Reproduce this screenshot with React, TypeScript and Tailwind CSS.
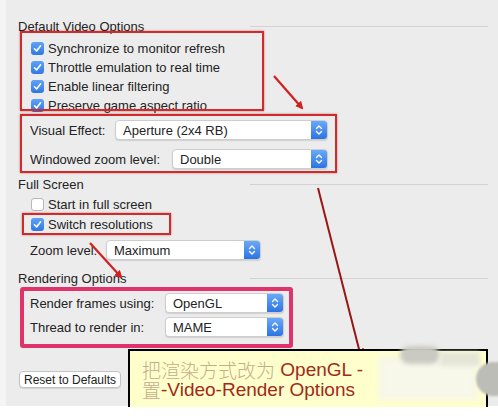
import React from "react";

const font = { fontFamily: '"Liberation Sans", Arial, sans-serif' };

function Check({ checked }: { checked: boolean }) {
  return checked ? (
    <div className="w-[13px] h-[13px] rounded-[3px] bg-linear-to-b from-[#5ea3f6] to-[#2f78e4] flex items-center justify-center shrink-0">
      <svg width="9" height="9" viewBox="0 0 9 9">
        <path d="M1.5 4.8 L3.6 6.9 L7.6 1.8" stroke="white" strokeWidth="1.6" fill="none" strokeLinecap="round" strokeLinejoin="round" />
      </svg>
    </div>
  ) : (
    <div className="w-[13px] h-[13px] rounded-[3px] bg-white border border-[#b8b8b8] shrink-0" />
  );
}

function CheckRow({ checked, label, h }: { checked: boolean; label: string; h: string }) {
  return (
    <div className={`${h} flex items-center pl-[13px] gap-[4px]`}>
      <Check checked={checked} />
      <span className="text-[13px] text-[#232323] leading-none">{label}</span>
    </div>
  );
}

function Select({ value, w }: { value: string; w: string }) {
  return (
    <div className={`${w} h-[20px] bg-white border border-[#cdcdcd] rounded-[4px] shadow-[0_1px_1px_rgba(0,0,0,0.12)] flex items-center overflow-hidden`}>
      <span className="flex-1 pl-[7px] text-[13px] text-[#232323] leading-none">{value}</span>
      <div className="w-[16px] h-full bg-linear-to-b from-[#68a9f7] to-[#2c73e3] flex items-center justify-center">
        <svg width="8" height="12" viewBox="0 0 8 12">
          <path d="M1.5 4.5 L4 2 L6.5 4.5 M1.5 7.5 L4 10 L6.5 7.5" stroke="white" strokeWidth="1.4" fill="none" strokeLinecap="round" strokeLinejoin="round" />
        </svg>
      </div>
    </div>
  );
}

function SelectRow({ label, lw, value, sw, h }: { label: string; lw: string; value: string; sw: string; h: string }) {
  return (
    <div className={`${h} flex items-center pl-[12px]`}>
      <span className={`${lw} text-[13px] text-[#232323] leading-none`}>{label}</span>
      <Select value={value} w={sw} />
    </div>
  );
}

function Header({ title, mt }: { title: string; mt: string }) {
  return (
    <div className={`${mt} h-[16px] flex items-center`}>
      <span className="text-[13px] text-[#232323] leading-none">{title}</span>
      <div className="ml-auto w-[238px] h-px bg-[#d3d3d3]" />
    </div>
  );
}

const cjk = { fontFamily: '"Noto Sans CJK SC", sans-serif', fontWeight: 300 };

export default function App() {
  return (
    <div className="relative w-[498px] h-[417px] bg-white overflow-hidden" style={font}>
      <div className="flex h-[406px]">
        <div className="w-[6px] bg-[#f4f4f4]" />
        <div className="flex-1 bg-[#ececec] pl-[12px] pr-[10px] pt-[18px] flex flex-col">
          <Header title="Default Video Options" mt="mt-0" />
          <div className="mt-[5px] flex flex-col">
            <CheckRow checked label="Synchronize to monitor refresh" h="h-[19px]" />
            <CheckRow checked label="Throttle emulation to real time" h="h-[19px]" />
            <CheckRow checked label="Enable linear filtering" h="h-[19px]" />
            <CheckRow checked label="Preserve game aspect ratio" h="h-[19px]" />
          </div>
          <div className="mt-[5px]">
            <SelectRow label="Visual Effect:" lw="w-[85px]" value="Aperture (2x4 RB)" sw="w-[213px]" h="h-[20px]" />
          </div>
          <div className="mt-[9px]">
            <SelectRow label="Windowed zoom level:" lw="w-[142px]" value="Double" sw="w-[156px]" h="h-[20px]" />
          </div>
          <Header title="Full Screen" mt="mt-[7px]" />
          <div className="mt-[2px] flex flex-col">
            <CheckRow checked={false} label="Start in full screen" h="h-[20px]" />
            <CheckRow checked label="Switch resolutions" h="h-[20px]" />
          </div>
          <div className="mt-[6px]">
            <SelectRow label="Zoom level:" lw="w-[76px]" value="Maximum" sw="w-[155px]" h="h-[20px]" />
          </div>
          <Header title="Rendering Options" mt="mt-[10px]" />
          <div className="mt-[7px]">
            <SelectRow label="Render frames using:" lw="w-[135px]" value="OpenGL" sw="w-[119px]" h="h-[20px]" />
          </div>
          <div className="mt-[4px]">
            <SelectRow label="Thread to render in:" lw="w-[135px]" value="MAME" sw="w-[119px]" h="h-[20px]" />
          </div>
          <div className="mt-[34px] ml-[1px]">
            <div className="w-[102px] h-[17px] bg-white border border-[#c4c4c4] rounded-[4px] shadow-[0_1px_1px_rgba(0,0,0,0.1)] flex items-center justify-center text-[12px] text-[#232323] leading-none">
              Reset to Defaults
            </div>
          </div>
        </div>
      </div>

      {/* red annotation boxes */}
      <div className="absolute left-[20px] top-[31px] w-[244px] h-[80px] border-2 border-[#d22a2a] shadow-[0_0_2px_rgba(120,0,0,0.5)]" />
      <div className="absolute left-[20px] top-[114px] w-[317px] h-[59px] border-2 border-[#d22a2a] shadow-[0_0_2px_rgba(120,0,0,0.5)]" />
      <div className="absolute left-[22px] top-[213px] w-[149px] h-[22px] border-2 border-[#d22a2a] shadow-[0_0_2px_rgba(120,0,0,0.5)]" />
      <div className="absolute left-[20px] top-[287px] w-[273px] h-[61px] border-4 border-[#e0336b] rounded-[3px]" />

      {/* arrows */}
      <svg className="absolute left-0 top-0 pointer-events-none" width="498" height="417">
        <defs>
          <marker id="ah" markerWidth="8" markerHeight="8" refX="6" refY="4" orient="auto" markerUnits="userSpaceOnUse">
            <path d="M0 0 L8 4 L0 8 Z" fill="#d41f1f" />
          </marker>
          <marker id="ah2" markerWidth="10" markerHeight="10" refX="8" refY="5" orient="auto" markerUnits="userSpaceOnUse">
            <path d="M0 0 L10 5 L0 10 Z" fill="#c01818" />
          </marker>
        </defs>
        <line x1="274" y1="76" x2="302" y2="108" stroke="#d41f1f" strokeWidth="2.2" markerEnd="url(#ah)" />
        <line x1="318" y1="188" x2="361" y2="357" stroke="#9a1616" strokeWidth="2" markerEnd="url(#ah2)" />
        <line x1="90" y1="243" x2="121" y2="277" stroke="#d41f1f" strokeWidth="2.2" markerEnd="url(#ah)" />
      </svg>

      {/* yellow note */}
      <div className="absolute left-[128px] top-[349px] w-[360px] h-[58px] bg-[#ffffcc] border-2 border-b-0 border-black pl-[12px] pt-[8px] flex flex-col">
        <div className="h-[20px] flex items-center whitespace-nowrap">
          <span className="text-[19px] leading-[19px] text-[#c4ad8e]" style={cjk}>把渲染方式改为</span>
          <span className="text-[19px] leading-[19px] text-[#a2291a]">&nbsp;OpenGL -</span>
        </div>
        <div className="h-[20px] flex items-center whitespace-nowrap">
          <span className="text-[19px] leading-[19px] text-[#c4ad8e]" style={cjk}>置</span>
          <span className="text-[19px] leading-[19px] text-[#a2291a]">-Video-Render Options</span>
        </div>
      </div>

      {/* smudge */}
      <div className="absolute left-[378px] top-[356px] w-[100px] h-[44px] bg-[#f7f7ea] blur-[3px]" />
      <div className="absolute left-[400px] top-[346px] w-[40px] h-[18px] rounded-full bg-[#cacac2] blur-[2px]" />
      <div className="absolute left-[440px] top-[352px] w-[40px] h-[14px] bg-[#e6e6d8] blur-[2px]" />
      <div className="absolute left-[476px] top-[362px] w-[26px] h-[34px] rounded-l-full bg-[#bdbdb7] blur-[1px]" />
    </div>
  );
}
